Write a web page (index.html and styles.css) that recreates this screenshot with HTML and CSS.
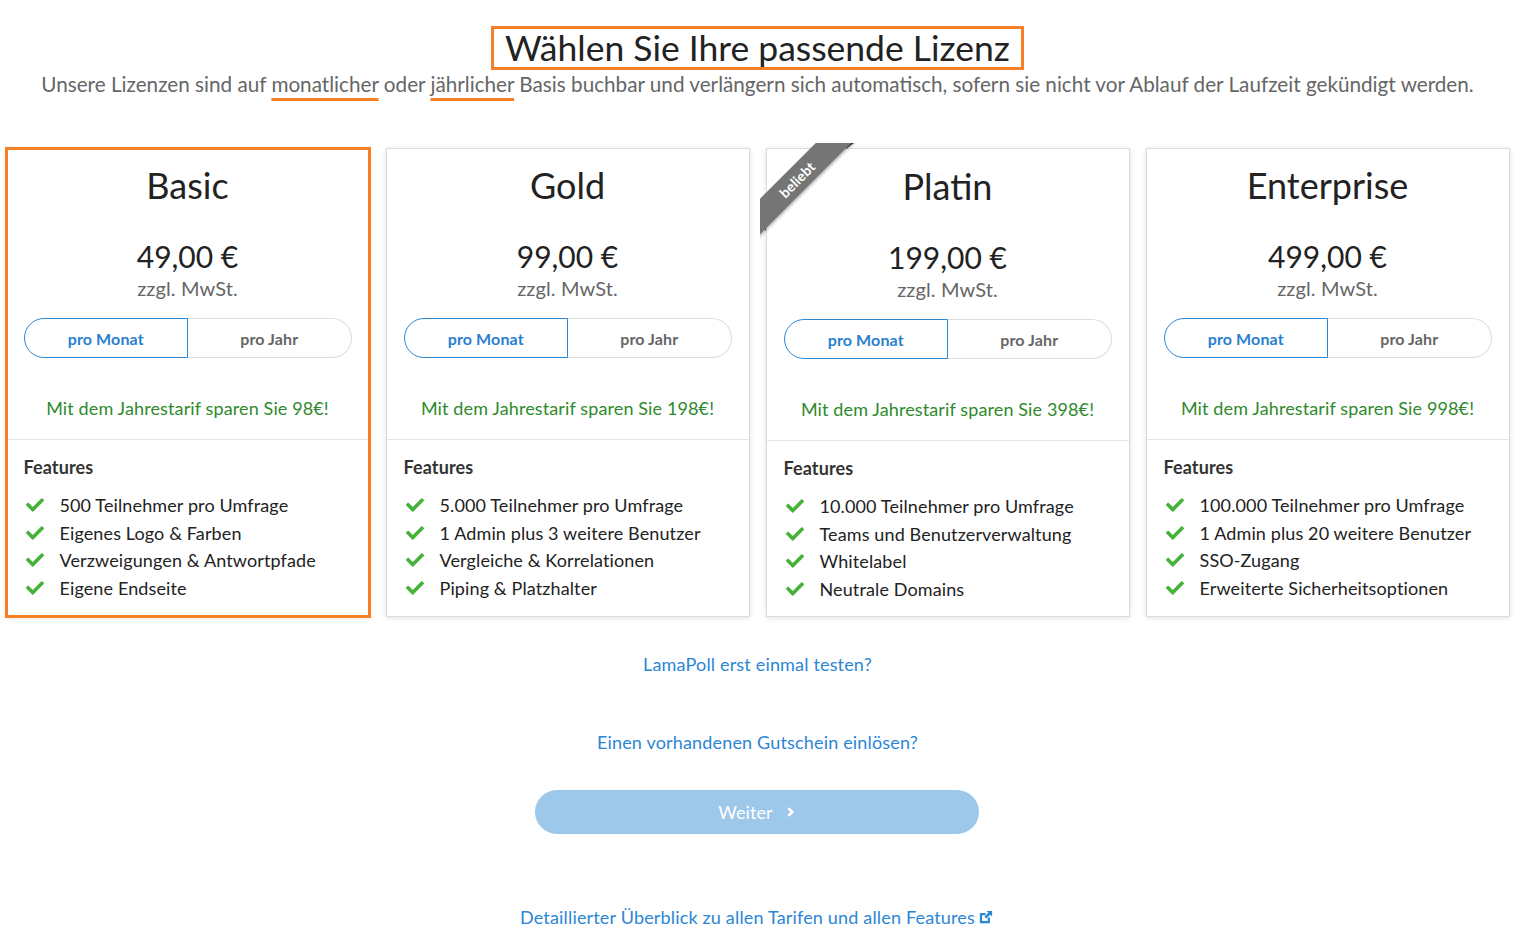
FILE: index.html
```html
<!DOCTYPE html>
<html lang="de">
<head>
<meta charset="utf-8">
<title>Lizenz wählen</title>
<link rel="stylesheet" href="styles.css">
</head>
<body>
<div class="page">
  <header class="head">
    <h1 class="title">Wählen Sie Ihre passende Lizenz</h1>
    <p class="subtitle">Unsere Lizenzen sind auf <span class="mark">monatlicher</span> oder <span class="mark">jährlicher</span> Basis buchbar und verlängern sich automatisch, sofern sie nicht vor Ablauf der Laufzeit gekündigt werden.</p>
  </header>

  <div class="cards">
    <section class="card selected">
      <div class="card-top">
        <h2 class="plan">Basic</h2>
        <div class="price">49,00 €</div>
        <div class="tax">zzgl. MwSt.</div>
        <div class="toggle"><span class="opt active">pro Monat</span><span class="opt">pro Jahr</span></div>
        <div class="save">Mit dem Jahrestarif sparen Sie 98€!</div>
      </div>
      <div class="card-bottom">
        <h3 class="feat-head">Features</h3>
        <ul class="feats">
          <li><svg class="check" viewBox="0 60 512 392"><path d="M173.9 439.4l-166.4-166.4c-10-10-10-26.2 0-36.2l36.2-36.2c10-10 26.2-10 36.2 0L192 312.7 432.1 72.6c10-10 26.2-10 36.2 0l36.2 36.2c10 10 10 26.2 0 36.2l-294.4 294.4c-10 10-26.2 10-36.2 0z"/></svg>500 Teilnehmer pro Umfrage</li>
          <li><svg class="check" viewBox="0 60 512 392"><path d="M173.9 439.4l-166.4-166.4c-10-10-10-26.2 0-36.2l36.2-36.2c10-10 26.2-10 36.2 0L192 312.7 432.1 72.6c10-10 26.2-10 36.2 0l36.2 36.2c10 10 10 26.2 0 36.2l-294.4 294.4c-10 10-26.2 10-36.2 0z"/></svg>Eigenes Logo &amp; Farben</li>
          <li><svg class="check" viewBox="0 60 512 392"><path d="M173.9 439.4l-166.4-166.4c-10-10-10-26.2 0-36.2l36.2-36.2c10-10 26.2-10 36.2 0L192 312.7 432.1 72.6c10-10 26.2-10 36.2 0l36.2 36.2c10 10 10 26.2 0 36.2l-294.4 294.4c-10 10-26.2 10-36.2 0z"/></svg>Verzweigungen &amp; Antwortpfade</li>
          <li><svg class="check" viewBox="0 60 512 392"><path d="M173.9 439.4l-166.4-166.4c-10-10-10-26.2 0-36.2l36.2-36.2c10-10 26.2-10 36.2 0L192 312.7 432.1 72.6c10-10 26.2-10 36.2 0l36.2 36.2c10 10 10 26.2 0 36.2l-294.4 294.4c-10 10-26.2 10-36.2 0z"/></svg>Eigene Endseite</li>
        </ul>
      </div>
    </section>

    <section class="card">
      <div class="card-top">
        <h2 class="plan">Gold</h2>
        <div class="price">99,00 €</div>
        <div class="tax">zzgl. MwSt.</div>
        <div class="toggle"><span class="opt active">pro Monat</span><span class="opt">pro Jahr</span></div>
        <div class="save">Mit dem Jahrestarif sparen Sie 198€!</div>
      </div>
      <div class="card-bottom">
        <h3 class="feat-head">Features</h3>
        <ul class="feats">
          <li><svg class="check" viewBox="0 60 512 392"><path d="M173.9 439.4l-166.4-166.4c-10-10-10-26.2 0-36.2l36.2-36.2c10-10 26.2-10 36.2 0L192 312.7 432.1 72.6c10-10 26.2-10 36.2 0l36.2 36.2c10 10 10 26.2 0 36.2l-294.4 294.4c-10 10-26.2 10-36.2 0z"/></svg>5.000 Teilnehmer pro Umfrage</li>
          <li><svg class="check" viewBox="0 60 512 392"><path d="M173.9 439.4l-166.4-166.4c-10-10-10-26.2 0-36.2l36.2-36.2c10-10 26.2-10 36.2 0L192 312.7 432.1 72.6c10-10 26.2-10 36.2 0l36.2 36.2c10 10 10 26.2 0 36.2l-294.4 294.4c-10 10-26.2 10-36.2 0z"/></svg>1 Admin plus 3 weitere Benutzer</li>
          <li><svg class="check" viewBox="0 60 512 392"><path d="M173.9 439.4l-166.4-166.4c-10-10-10-26.2 0-36.2l36.2-36.2c10-10 26.2-10 36.2 0L192 312.7 432.1 72.6c10-10 26.2-10 36.2 0l36.2 36.2c10 10 10 26.2 0 36.2l-294.4 294.4c-10 10-26.2 10-36.2 0z"/></svg>Vergleiche &amp; Korrelationen</li>
          <li><svg class="check" viewBox="0 60 512 392"><path d="M173.9 439.4l-166.4-166.4c-10-10-10-26.2 0-36.2l36.2-36.2c10-10 26.2-10 36.2 0L192 312.7 432.1 72.6c10-10 26.2-10 36.2 0l36.2 36.2c10 10 10 26.2 0 36.2l-294.4 294.4c-10 10-26.2 10-36.2 0z"/></svg>Piping &amp; Platzhalter</li>
        </ul>
      </div>
    </section>

    <section class="card popular">
      <div class="ribbon-wrap"><span class="ribbon">beliebt</span></div>
      <div class="card-top">
        <h2 class="plan">Platin</h2>
        <div class="price">199,00 €</div>
        <div class="tax">zzgl. MwSt.</div>
        <div class="toggle"><span class="opt active">pro Monat</span><span class="opt">pro Jahr</span></div>
        <div class="save">Mit dem Jahrestarif sparen Sie 398€!</div>
      </div>
      <div class="card-bottom">
        <h3 class="feat-head">Features</h3>
        <ul class="feats">
          <li><svg class="check" viewBox="0 60 512 392"><path d="M173.9 439.4l-166.4-166.4c-10-10-10-26.2 0-36.2l36.2-36.2c10-10 26.2-10 36.2 0L192 312.7 432.1 72.6c10-10 26.2-10 36.2 0l36.2 36.2c10 10 10 26.2 0 36.2l-294.4 294.4c-10 10-26.2 10-36.2 0z"/></svg>10.000 Teilnehmer pro Umfrage</li>
          <li><svg class="check" viewBox="0 60 512 392"><path d="M173.9 439.4l-166.4-166.4c-10-10-10-26.2 0-36.2l36.2-36.2c10-10 26.2-10 36.2 0L192 312.7 432.1 72.6c10-10 26.2-10 36.2 0l36.2 36.2c10 10 10 26.2 0 36.2l-294.4 294.4c-10 10-26.2 10-36.2 0z"/></svg>Teams und Benutzerverwaltung</li>
          <li><svg class="check" viewBox="0 60 512 392"><path d="M173.9 439.4l-166.4-166.4c-10-10-10-26.2 0-36.2l36.2-36.2c10-10 26.2-10 36.2 0L192 312.7 432.1 72.6c10-10 26.2-10 36.2 0l36.2 36.2c10 10 10 26.2 0 36.2l-294.4 294.4c-10 10-26.2 10-36.2 0z"/></svg>Whitelabel</li>
          <li><svg class="check" viewBox="0 60 512 392"><path d="M173.9 439.4l-166.4-166.4c-10-10-10-26.2 0-36.2l36.2-36.2c10-10 26.2-10 36.2 0L192 312.7 432.1 72.6c10-10 26.2-10 36.2 0l36.2 36.2c10 10 10 26.2 0 36.2l-294.4 294.4c-10 10-26.2 10-36.2 0z"/></svg>Neutrale Domains</li>
        </ul>
      </div>
    </section>

    <section class="card">
      <div class="card-top">
        <h2 class="plan">Enterprise</h2>
        <div class="price">499,00 €</div>
        <div class="tax">zzgl. MwSt.</div>
        <div class="toggle"><span class="opt active">pro Monat</span><span class="opt">pro Jahr</span></div>
        <div class="save">Mit dem Jahrestarif sparen Sie 998€!</div>
      </div>
      <div class="card-bottom">
        <h3 class="feat-head">Features</h3>
        <ul class="feats">
          <li><svg class="check" viewBox="0 60 512 392"><path d="M173.9 439.4l-166.4-166.4c-10-10-10-26.2 0-36.2l36.2-36.2c10-10 26.2-10 36.2 0L192 312.7 432.1 72.6c10-10 26.2-10 36.2 0l36.2 36.2c10 10 10 26.2 0 36.2l-294.4 294.4c-10 10-26.2 10-36.2 0z"/></svg>100.000 Teilnehmer pro Umfrage</li>
          <li><svg class="check" viewBox="0 60 512 392"><path d="M173.9 439.4l-166.4-166.4c-10-10-10-26.2 0-36.2l36.2-36.2c10-10 26.2-10 36.2 0L192 312.7 432.1 72.6c10-10 26.2-10 36.2 0l36.2 36.2c10 10 10 26.2 0 36.2l-294.4 294.4c-10 10-26.2 10-36.2 0z"/></svg>1 Admin plus 20 weitere Benutzer</li>
          <li><svg class="check" viewBox="0 60 512 392"><path d="M173.9 439.4l-166.4-166.4c-10-10-10-26.2 0-36.2l36.2-36.2c10-10 26.2-10 36.2 0L192 312.7 432.1 72.6c10-10 26.2-10 36.2 0l36.2 36.2c10 10 10 26.2 0 36.2l-294.4 294.4c-10 10-26.2 10-36.2 0z"/></svg>SSO-Zugang</li>
          <li><svg class="check" viewBox="0 60 512 392"><path d="M173.9 439.4l-166.4-166.4c-10-10-10-26.2 0-36.2l36.2-36.2c10-10 26.2-10 36.2 0L192 312.7 432.1 72.6c10-10 26.2-10 36.2 0l36.2 36.2c10 10 10 26.2 0 36.2l-294.4 294.4c-10 10-26.2 10-36.2 0z"/></svg>Erweiterte Sicherheitsoptionen</li>
        </ul>
      </div>
    </section>
  </div>

  <div class="actions">
    <a class="link test" href="#">LamaPoll erst einmal testen?</a>
    <a class="link voucher" href="#">Einen vorhandenen Gutschein einlösen?</a>
    <button class="next" type="button">Weiter<svg class="chev" viewBox="0 0 10 14"><path d="M2.5 2.5 L7 7 L2.5 11.5" fill="none" stroke="#fff" stroke-width="3"/></svg></button>
    <a class="link overview" href="#">Detaillierter Überblick zu allen Tarifen und allen Features<svg class="ext" viewBox="0 0 16 16"><path d="M1 3.5 H7.5 V6 H3.5 V12.5 H10 V8.5 H12.5 V15 H1 Z" fill="#2b86d6"/><path d="M8.5 1 H15 V7.5 L12.8 5.3 L8.3 9.8 L6.2 7.7 L10.7 3.2 Z" fill="#2b86d6"/></svg></a>
  </div>
</div>
</body>
</html>
```
FILE: styles.css
```css
* { box-sizing: border-box; }

html, body {
  margin: 0;
  padding: 0;
  background: #fff;
}

body {
  font-family: Lato, "Open Sans", "Liberation Sans", sans-serif;
  color: #222;
  letter-spacing: 0.12px;
}

.page {
  padding-top: 26px;
  display: flex;
  flex-direction: column;
  align-items: center;
}

.head {
  display: flex;
  flex-direction: column;
  align-items: center;
}

.title {
  margin: 0;
  font-size: 35.5px;
  line-height: 38px;
  font-weight: 400;
  letter-spacing: 0;
  color: #222;
  border: 3px solid #f68026;
  padding: 0 11px 0 11px;
}

.subtitle {
  margin: 2px 0 0;
  font-size: 20.7px;
  line-height: 24px;
  letter-spacing: 0;
  color: #666;
  white-space: nowrap;
}

.mark {
  text-decoration: underline;
  text-decoration-color: #f68026;
  text-decoration-thickness: 3px;
  text-underline-offset: 6px;
}

.cards {
  margin-top: 52px;
  display: grid;
  grid-template-columns: repeat(4, 364px);
  gap: 16px;
}

.card {
  position: relative;
  border: 1px solid #dcdcdc;
  box-shadow: 0 1px 5px rgba(0,0,0,0.12);
  background: #fff;
  display: flex;
  flex-direction: column;
}

.card.selected {
  outline: 3px solid #f68026;
  outline-offset: -2px;
  z-index: 1;
}

.card-top {
  padding: 14px 17px 18px;
  display: flex;
  flex-direction: column;
  align-items: center;
  border-bottom: 1px solid #e6e6e6;
}

.plan {
  margin: 0;
  font-size: 36px;
  line-height: 44px;
  font-weight: 400;
  letter-spacing: 0;
  color: #222;
}

.price {
  margin-top: 31px;
  font-size: 30px;
  line-height: 36px;
  letter-spacing: 0;
  color: #222;
}

.tax {
  margin-top: 1px;
  font-size: 20px;
  line-height: 26px;
  color: #666;
}

.toggle {
  margin-top: 17px;
  width: 100%;
  display: flex;
  height: 40px;
}

.opt {
  flex: 1;
  display: flex;
  align-items: center;
  justify-content: center;
  font-size: 16px;
  font-weight: 700;
  color: #666;
  border: 1px solid #dddddd;
  border-left: none;
  border-radius: 0 20px 20px 0;
}

.opt.active {
  color: #2b7fd1;
  border: 1px solid #2b86d6;
  border-radius: 20px 0 0 20px;
}

.save {
  margin-top: 37px;
  font-size: 18px;
  line-height: 26px;
  color: #2e8a2c;
}

.card-bottom {
  padding: 14px 17px 13px;
}

.feat-head {
  margin: 0;
  font-size: 18px;
  line-height: 26px;
  font-weight: 700;
  color: #333;
}

.feats {
  list-style: none;
  margin: 12px 0 0;
  padding: 0;
}

.feats li {
  position: relative;
  padding-left: 36px;
  font-size: 18px;
  line-height: 27.5px;
  color: #222;
}

.check {
  position: absolute;
  left: 2px;
  top: 6px;
  width: 18px;
  height: 14px;
  fill: #46b23a;
}

.popular .plan { margin-top: 1px; }

.ribbon-wrap {
  position: absolute;
  top: -6px;
  left: -7px;
  width: 100px;
  height: 100px;
  overflow: hidden;
  z-index: 2;
}

.ribbon-wrap::before,
.ribbon-wrap::after {
  content: "";
  position: absolute;
  border-style: solid;
}

.ribbon-wrap::before {
  left: 0;
  top: 80px;
  border-width: 0 6px 8px 0;
  border-color: transparent #4a4a4a transparent transparent;
}

.ribbon-wrap::after {
  left: 86px;
  top: 0;
  border-width: 0 0 6px 8px;
  border-color: transparent transparent transparent #4a4a4a;
}

.ribbon {
  position: absolute;
  left: -38px;
  top: 24px;
  width: 150px;
  height: 25px;
  line-height: 25px;
  transform: rotate(-45deg);
  background: #757575;
  color: #fff;
  font-size: 14px;
  font-weight: 700;
  text-align: center;
  box-shadow: 0 2px 3px rgba(0,0,0,0.25);
  z-index: 3;
}

.actions {
  margin-top: 35px;
  display: flex;
  flex-direction: column;
  align-items: center;
}

.link {
  font-size: 18px;
  line-height: 24px;
  letter-spacing: 0.17px;
  color: #2b86d6;
  text-decoration: none;
}

.voucher { margin-top: 54px; }

.next {
  margin-top: 36px;
  width: 444px;
  height: 44px;
  border: none;
  border-radius: 22px;
  background: #9dc8ea;
  color: #fff;
  font-family: Lato, "Open Sans", "Liberation Sans", sans-serif;
  font-size: 18px;
  letter-spacing: 0.12px;
  display: flex;
  align-items: center;
  justify-content: center;
  gap: 13px;
  padding: 0 2px 0 0;
}

.chev {
  width: 9px;
  height: 12px;
}

.overview {
  margin-top: 71px;
  display: flex;
  align-items: center;
  gap: 4px;
  padding-right: 2px;
}

.ext {
  width: 14px;
  height: 14px;
}
```
